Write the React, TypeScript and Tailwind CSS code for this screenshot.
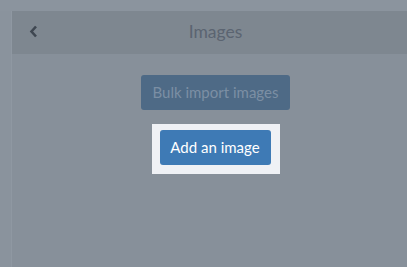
export default function App() {
  return (
    <div
      className="flex h-[267px] w-[407px] flex-col overflow-hidden bg-[#8b949e]"
      style={{ fontFamily: "Lato, 'Open Sans', sans-serif" }}
    >
      <div className="h-[11px] shrink-0" />
      <div className="flex min-h-0 flex-1">
        {/* left rail */}
        <div className="w-[12px] shrink-0 border-r border-[#8f98a2] bg-[#8a939d]" />

        {/* panel */}
        <div className="flex w-[407px] shrink-0 flex-col bg-[#87909a]">
          <div className="relative flex h-[43px] items-center justify-center bg-[#7e8790]">
            <button className="absolute left-[17px] top-[14px] text-[#3f4751]" aria-label="Back">
              <svg width="9" height="13" viewBox="0 0 9 13" fill="none">
                <path d="M7 1.5 2.5 6.5 7 11.5" stroke="currentColor" strokeWidth="2.6" strokeLinejoin="miter" />
              </svg>
            </button>
            <h2 className="text-[17.5px] text-[#5b6471]">Images</h2>
          </div>

          <div className="flex flex-col items-center pt-[21px]">
            <button className="h-[35px] w-[149px] rounded-[3px] bg-[#4e6a86] text-[15px] text-[#7c8fa4]">
              Bulk import images
            </button>
            <div className="mt-[14px] bg-[#eff1f5] pb-[9px] pl-[8px] pr-[9px] pt-[6px]">
              <button className="h-[35px] w-[111px] rounded-[3px] bg-[#3e7ab5] text-[15px] text-white">
                Add an image
              </button>
            </div>
          </div>
        </div>
      </div>
    </div>
  );
}
